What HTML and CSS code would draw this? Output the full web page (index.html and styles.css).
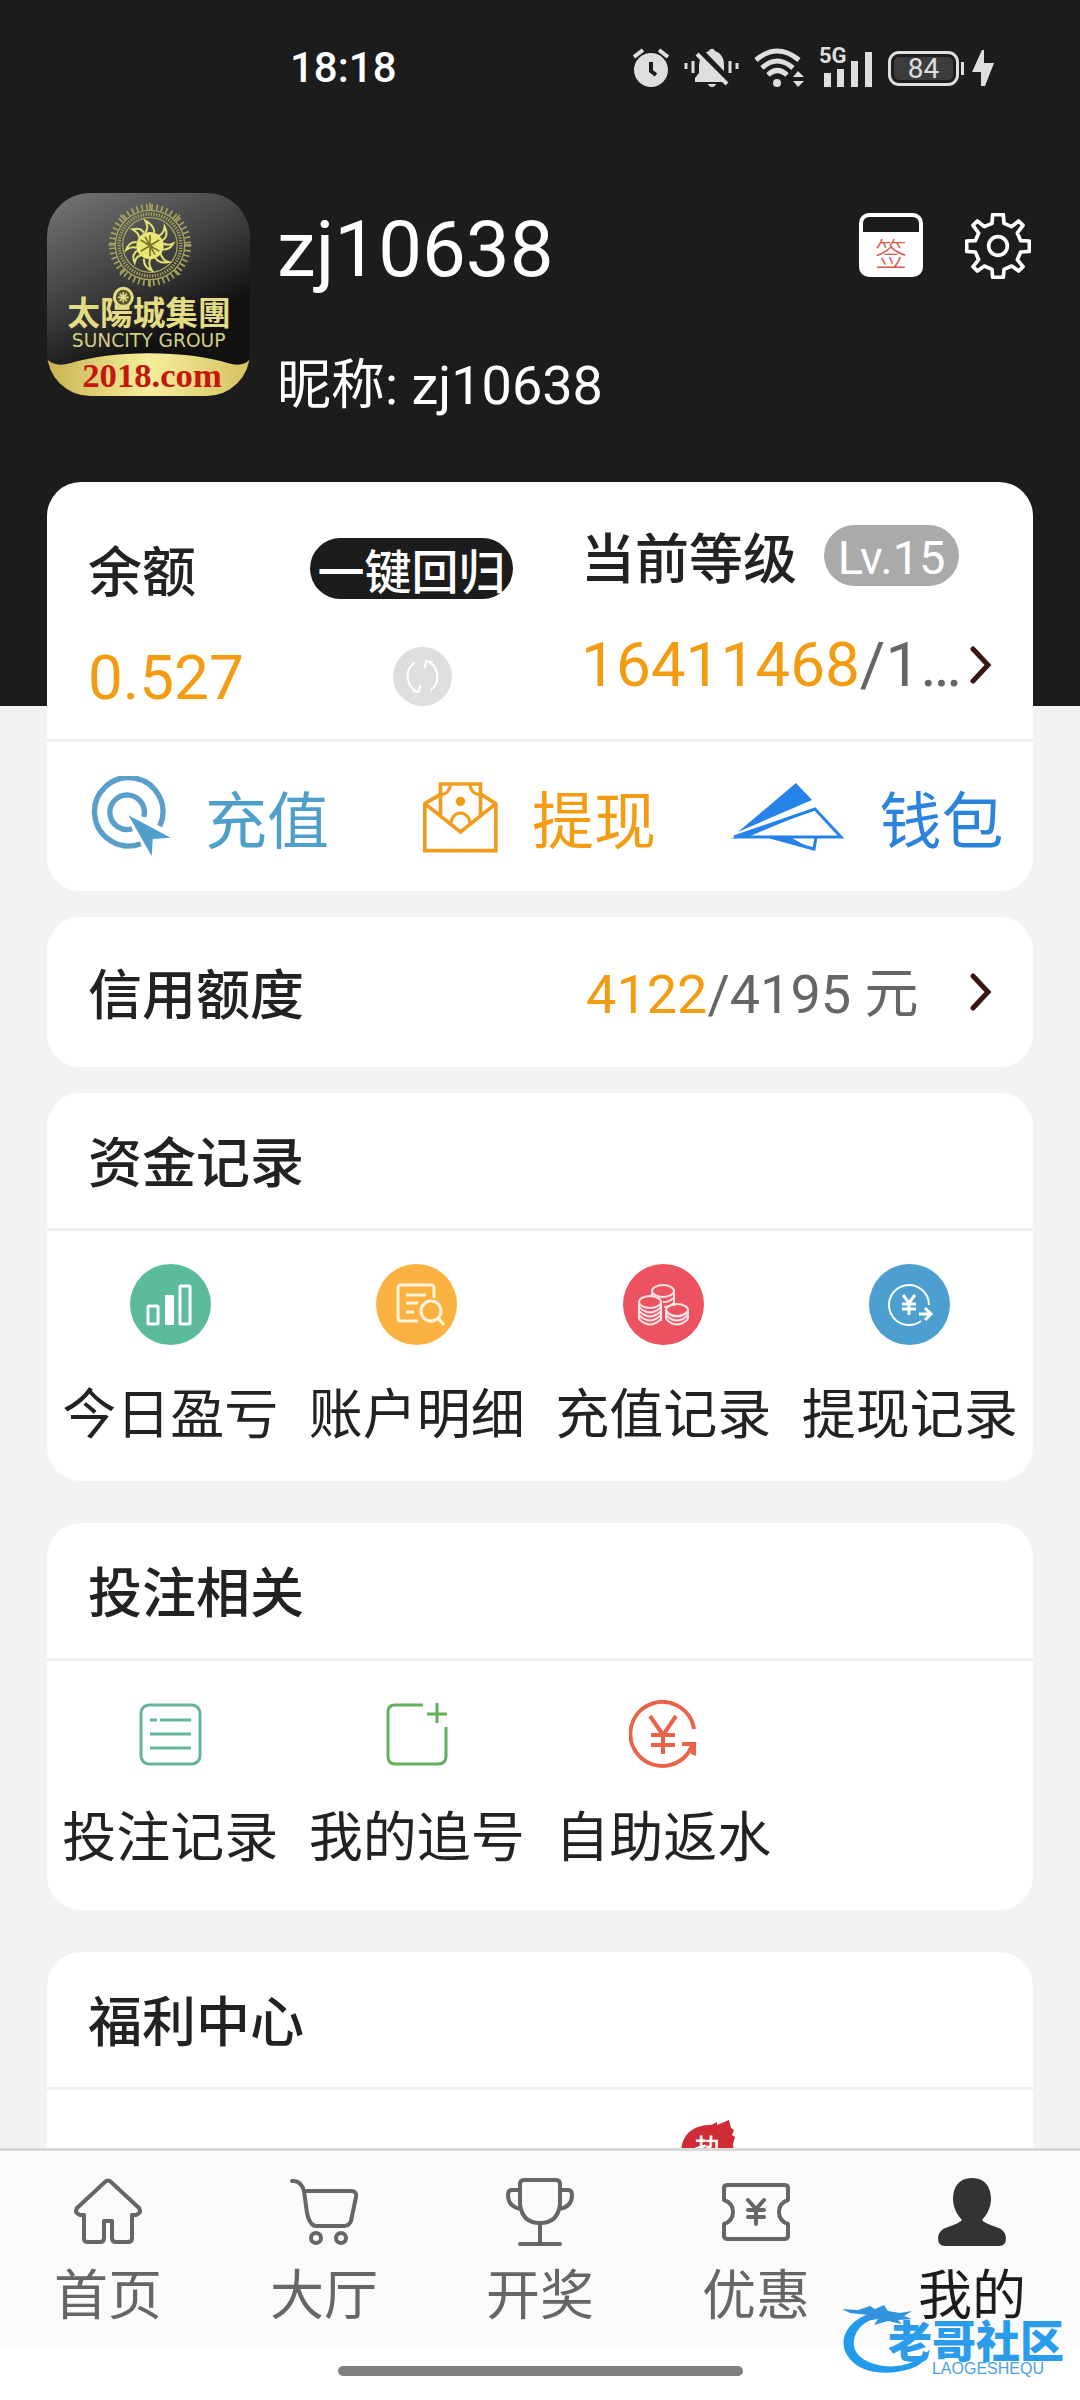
FILE: index.html
```html
<!DOCTYPE html>
<html lang="zh-CN">
<head>
  <meta charset="UTF-8">
  <title>我的</title>
  <meta name="viewport" content="width=device-width, initial-scale=1.0">
  <link rel="stylesheet" href="styles.css">
</head>
<body>

  <div class="screen">
    <div class="content">

      <header class="header">
        <div class="status-bar">
          <span class="clock">18:18</span>
          <div class="status-icons">
            <svg width="36" height="40" viewBox="0 0 36 40" fill="none" stroke="#dedede">
              <circle cx="18" cy="22" r="17" fill="#dedede" stroke="none"/>
              <path d="M1 9L10 2M35 9L26 2" stroke-width="4"/>
              <path d="M18 14V23L23 27" stroke="#1c1c1c" stroke-width="4"/>
            </svg>
            <svg width="55" height="40" viewBox="0 0 55 40">
              <path d="M11 34V30L15 25V17C16 6 22 4 25 3C26 0 30 0 31 3C37 5 40 10 40 17V25L45 30V34Z" fill="#dedede"/>
              <path d="M24 36H32Q31 39 28 39Q25 39 24 36Z" fill="#dedede"/>
              <path d="M15 3L46 35" stroke="#1c1c1c" stroke-width="8"/>
              <path d="M13 6L43 36" stroke="#dedede" stroke-width="4"/>
              <path d="M2 15V21M9 13V25M46 13V25M53 15V21" stroke="#dedede" stroke-width="3"/>
            </svg>
            <svg width="50" height="40" viewBox="0 0 50 40" fill="none" stroke="#dedede" stroke-width="5">
              <path d="M2 12Q23-6 45 12M8 20Q23 6 39 20M14 27Q23 18 33 27"/>
              <circle cx="23" cy="35" r="4" fill="#dedede" stroke="none"/>
              <path d="M39 29L44 23L50 29ZM39 33L44 39L50 33Z" fill="#dedede" stroke="none"/>
            </svg>
            <div class="signal">
              <span class="network">5G</span>
              <svg width="54" height="40" viewBox="0 0 54 40" fill="#dedede">
                <rect x="5" y="25" width="7" height="14"/>
                <rect x="18" y="21" width="7" height="18"/>
                <rect x="32" y="13" width="7" height="26"/>
                <rect x="46" y="4" width="7" height="35"/>
              </svg>
            </div>
            <span class="battery">84</span>
            <svg width="22" height="36" viewBox="0 0 22 36"><path d="M10 0L0 22H9V36H13L22 13H12V0Z" fill="#dedede"/></svg>
          </div>
        </div>

        <div class="profile">
          <svg class="avatar" viewBox="51 39 609 609" role="img" aria-label="太陽城集團">
            <defs>
              <linearGradient id="dark" x1="0" y1="0" x2="0.5" y2="1">
                <stop offset="0" stop-color="#777"/>
                <stop offset="0.5" stop-color="#3c3c3c"/>
                <stop offset="0.8" stop-color="#111"/>
              </linearGradient>
              <linearGradient id="gold" x1="0" y1="0" x2="1" y2="0">
                <stop offset="0" stop-color="#c9b24f"/>
                <stop offset="0.5" stop-color="#f6ee9c"/>
                <stop offset="1" stop-color="#d6c260"/>
              </linearGradient>
              <clipPath id="round"><rect x="51" y="39" width="609" height="609" rx="130"/></clipPath>
            </defs>
            <g clip-path="url(#round)">
              <rect x="51" y="39" width="609" height="609" fill="url(#dark)"/>
              <path d="M51 538Q75 562 120 550Q220 520 355 520Q500 520 595 550Q640 562 660 538V648H51Z" fill="url(#gold)"/>
              <g fill="none" stroke="#a8a45c">
                <circle cx="360" cy="195" r="114" stroke-width="18" stroke-dasharray="5 10"/>
                <circle cx="360" cy="195" r="104" stroke-width="4"/>
                <circle cx="360" cy="195" r="93" stroke-width="10" stroke-dasharray="4 4"/>
                <circle cx="360" cy="195" r="82" stroke-width="4"/>
                <path d="M360 68V90M360 300V322M235 195H255M465 195H485M270 105L285 120M450 105L435 120M270 285L285 270M450 285L435 270" stroke-width="5"/>
              </g>
              <g fill="none" stroke="#e4e273" stroke-width="6">
                <path d="M345 158Q358 145 346 122Q375 138 372 158M385 168Q402 162 404 140Q418 168 396 182M400 190Q412 198 430 190Q418 212 396 208M392 220Q396 240 415 246Q388 252 376 234M362 236Q352 250 366 272Q340 262 342 236M334 226Q318 228 314 248Q302 224 324 210M320 204Q306 198 288 210Q298 184 320 186M328 174Q326 158 308 148Q334 142 342 160"/>
              </g>
              <circle cx="360" cy="197" r="41" fill="#e9e874"/>
              <path d="M360 165V229M332 180L388 214M388 180L332 214M345 170L375 224" stroke="#77742c" stroke-width="5"/>
              <text class="logo-cn" x="357" y="435" text-anchor="middle" fill="#e3dc84">太陽城集團</text>
              <circle cx="280" cy="352" r="27" fill="#55532f" stroke="#e3dc84" stroke-width="9"/>
              <path d="M280 336V368M264 352H296M269 341L291 363M291 341L269 363" stroke="#e3dc84" stroke-width="5"/>
              <text class="logo-en" x="356" y="500" text-anchor="middle" fill="#d5cf80">SUNCITY GROUP</text>
              <text class="logo-url" x="366" y="622" text-anchor="middle" fill="#c4160c">2018.com</text>
            </g>
          </svg>
          <div class="user">
            <h1 class="username">zj10638</h1>
            <p class="nickname">昵称: zj10638</p>
          </div>
          <div class="tools">
            <button class="sign" aria-label="签到"><span class="sign-text">签</span></button>
            <button aria-label="设置">
              <svg width="66" height="66" viewBox="435 67 198 198" fill="none" stroke="#fff" stroke-width="11" stroke-linejoin="round">
                <path d="M518 72L550 72L552 98L575 108L596 91L609 104L592 127L602 150L628 151L628 182L602 184L592 207L609 228L596 241L575 226L552 236L550 260L518 260L516 236L493 226L472 241L459 228L476 207L466 184L440 182L440 151L466 150L476 127L459 104L472 91L493 108L516 98Z"/>
                <circle cx="534" cy="166" r="28"/>
              </svg>
            </button>
          </div>
        </div>
      </header>

      <main class="cards">
        <section class="card">
          <div class="balance">
            <div class="wallet">
              <span class="label">余额</span>
              <button class="recall">一键回归</button>
              <span class="amount">0.527</span>
              <button class="refresh" aria-label="刷新">
                <svg width="59" height="59" viewBox="0 0 59 59" fill="none" stroke="#fff" stroke-width="2" stroke-linecap="round">
                  <circle cx="29.5" cy="29.5" r="29.5" fill="#dedede" stroke="none"/>
                  <path d="M21 16A17 17 0 0 0 25 45M20 44L26 45L27 39M38 43A17 17 0 0 0 34 14M39 15L33 14L32 20"/>
                </svg>
              </button>
            </div>
            <div class="level">
              <div class="level-head">
                <span class="label">当前等级</span>
                <span class="level-badge">Lv.15</span>
              </div>
              <a class="level-value" href="#">
                <span><b>16411468</b>/1…</span>
                <svg class="chevron" width="22" height="38" viewBox="0 0 22 38"><path d="M3 3L18 19L3 35"/></svg>
              </a>
            </div>
          </div>
          <div class="actions">
            <a class="action deposit" href="#">
              <svg width="81" height="81" viewBox="92 80 244 244" fill="none" stroke="#5a9fca" stroke-width="16">
                <path d="M302 231A103 103 0 1 0 245 284M254 203A52 52 0 1 0 219 239"/>
                <path d="M208 198L335 266L281 270L278 322Z" fill="#4f9fcb" stroke="none"/>
              </svg>
              充值
            </a>
            <a class="action withdraw" href="#">
              <svg width="75" height="72" viewBox="1088 92 224 216" fill="none" stroke="#f09d1e" stroke-width="11">
                <path d="M1140 132L1093 160V301H1306V160L1262 132M1093 160L1200 245L1306 160M1140 195V101H1260V195"/>
                <path d="M1142 133Q1166 130 1170 103M1258 133Q1232 130 1228 103M1171 222A29 34 0 0 1 1229 222" stroke-width="9"/>
                <circle cx="1200" cy="153" r="14" fill="#f39a13" stroke="none"/>
              </svg>
              提现
            </a>
            <a class="action purse" href="#">
              <svg width="117" height="68" viewBox="0 0 117 68">
                <path d="M68 0L84 17L10 49Z" fill="#2583ea"/>
                <path d="M87 26L113 54H6Z" fill="none" stroke="#2583ea" stroke-width="3"/>
                <path d="M2 56L87 26L22 53Z" fill="#2583ea"/>
                <path d="M42 54L86 66L88 54" fill="none" stroke="#2583ea" stroke-width="3"/>
                <path d="M42 54L80 64L62 54Z" fill="#2583ea"/>
              </svg>
              钱包
            </a>
          </div>
        </section>

        <section class="card credit">
          <h2 class="label">信用额度</h2>
          <a class="credit-value" href="#">
            <span><b>4122</b>/4195 元</span>
            <svg class="chevron" width="22" height="38" viewBox="0 0 22 38"><path d="M3 3L18 19L3 35"/></svg>
          </a>
        </section>

        <section class="card group">
          <h2 class="title">资金记录</h2>
          <div class="items">
            <a class="item" href="#">
              <svg width="81" height="81" viewBox="0 0 81 81" fill="none" stroke="#fff" stroke-width="3">
                <circle cx="40.5" cy="40.5" r="40.5" fill="#5cbb9b" stroke="none"/>
                <rect x="18" y="42" width="10" height="18" rx="1"/>
                <rect x="35" y="31" width="9" height="30" rx="1" fill="#fff" stroke="none"/>
                <rect x="50" y="22" width="10" height="38" rx="1"/>
              </svg>
              今日盈亏
            </a>
            <a class="item" href="#">
              <svg width="81" height="81" viewBox="0 0 81 81" fill="none" stroke="#fff5dd" stroke-width="3">
                <circle cx="40.5" cy="40.5" r="40.5" fill="#fbb241" stroke="none"/>
                <path d="M58 34V24Q58 21 55 21H25Q22 21 22 24V54Q22 57 25 57H42M30 31H50M30 39H42M30 48H38"/>
                <circle cx="55" cy="47" r="10"/>
                <path d="M62 54L68 61"/>
              </svg>
              账户明细
            </a>
            <a class="item" href="#">
              <svg width="81" height="81" viewBox="0 0 81 81" fill="none" stroke="#ffe3e6" stroke-width="2">
                <circle cx="40.5" cy="40.5" r="40.5" fill="#ec525f" stroke="none"/>
                <ellipse cx="40" cy="27" rx="11" ry="6"/>
                <path d="M51 27V42M50 34Q47 38 40 38M51 39Q47 43 41 43M29 27V32"/>
                <ellipse cx="27" cy="38" rx="11" ry="6"/>
                <path d="M16 38V55M38 38V57M16 43Q27 54 38 43M16 47Q27 58 38 47M16 51Q27 62 38 51M16 55Q27 66 38 55"/>
                <ellipse cx="54" cy="46" rx="11" ry="6"/>
                <path d="M43 46V55M65 46V55M43 51Q54 62 65 51M43 47Q54 58 65 47M43 55Q54 66 65 55"/>
              </svg>
              充值记录
            </a>
            <a class="item" href="#">
              <svg width="81" height="81" viewBox="0 0 81 81" fill="none" stroke="#fff" stroke-width="3">
                <circle cx="40.5" cy="40.5" r="40.5" fill="#4c9fce" stroke="none"/>
                <path d="M60 41A20 20 0 1 0 52 57" stroke-width="2"/>
                <path d="M34 31L40 39L46 31M40 39V51M33 40H47M33 45H47M50 50H61M56 44L62 50L56 56"/>
              </svg>
              提现记录
            </a>
          </div>
        </section>

        <section class="card group">
          <h2 class="title">投注相关</h2>
          <div class="items items-small">
            <a class="item" href="#">
              <svg width="68" height="68" viewBox="0 0 68 68" fill="none" stroke="#66b59b" stroke-width="3">
                <rect x="5" y="5" width="59" height="59" rx="8"/>
                <path d="M14 20H21M24 20H55M14 34H55M14 48H55"/>
              </svg>
              投注记录
            </a>
            <a class="item" href="#">
              <svg width="68" height="68" viewBox="0 0 68 68" fill="none" stroke="#61af5b" stroke-width="3">
                <path d="M40 5H12Q5 5 5 12V56Q5 64 12 64H55Q63 64 63 56V27M54 3V23M44 14H64"/>
              </svg>
              我的追号
            </a>
            <a class="item" href="#">
              <svg width="68" height="68" viewBox="0 0 68 68" fill="none" stroke="#ec6248" stroke-width="4">
                <path d="M65 29A32 32 0 1 0 63 46"/>
                <path d="M53 42H67V56L62 54V46H53Z" fill="#ec6248" stroke="none"/>
                <path d="M21 16L34 35L47 16M34 35V54M22 35H46M22 45H46"/>
              </svg>
              自助返水
            </a>
          </div>
        </section>

        <section class="card group">
          <h2 class="title">福利中心</h2>
          <div class="items items-welfare">
            <div class="hot">
              <svg width="54" height="54" viewBox="0 0 54 54"><path d="M0 32C1 14 12 5 30 5L36 2L36 5L48 0L50 8L53 10L51 15L54 17L52 24Q56 54 27 54Q0 54 0 32Z" fill="#d02c35"/></svg>
              <span class="hot-text">热</span>
            </div>
          </div>
        </section>
      </main>
    </div>

    <nav class="tab-bar">
      <a class="tab" href="#">
        <svg width="68" height="68" viewBox="0 0 68 68"><path d="M31 4L3 30Q0 35 6 37H10V61Q10 64 14 64H26Q30 64 30 60V43H38V60Q38 64 42 64H54Q58 64 58 60V37H62Q68 35 65 30L37 4Q34 1 31 4Z"/></svg>
        首页
      </a>
      <a class="tab" href="#">
        <svg width="68" height="68" viewBox="0 0 68 68"><path d="M2 3Q11 2 14 13H61Q67 13 66 19L61 43Q59 48 54 48H26Q20 48 17 35L14 13"/><circle cx="26" cy="60" r="5"/><circle cx="51" cy="60" r="5"/></svg>
        大厅
      </a>
      <a class="tab" href="#">
        <svg width="68" height="68" viewBox="0 0 68 68"><path d="M18 2H50Q54 2 54 6V26Q52 45 34 45Q16 45 14 26V6Q14 2 18 2ZM14 12H6Q2 12 2 17Q2 29 15 31M54 12H62Q66 12 66 17Q66 29 53 31M34 45V66M14 66H54"/></svg>
        开奖
      </a>
      <a class="tab" href="#">
        <svg width="68" height="68" viewBox="0 0 68 68"><path d="M6 7H62Q66 7 66 10V22Q57 25 57 34Q57 43 66 46V58Q66 61 62 61H6Q2 61 2 58V46Q11 43 11 34Q11 25 2 22V10Q2 7 6 7ZM26 22L34 31L42 22M34 31V46M26 32H42M26 39H42"/></svg>
        优惠
      </a>
      <a class="tab active" href="#">
        <svg width="68" height="68" viewBox="0 0 68 68"><path d="M34 0C47 0 53 9 53 21C53 30 48 38 44 42Q46 45 58 49Q68 52 68 60Q68 68 61 68H7Q0 68 0 60Q0 52 10 49Q22 45 24 42C20 38 15 30 15 21C15 9 21 0 34 0Z"/></svg>
        我的
      </a>
    </nav>
    <div class="gesture-area"><div class="gesture-bar"></div></div>

    <div class="watermark">
      <svg width="90" height="70" viewBox="0 0 90 70">
        <path d="M30 9C5 16-4 36 5 51C16 70 45 72 68 65C80 61 86 54 88 45C78 58 60 64 42 62C22 59 10 50 12 36C14 24 24 15 38 14Z" fill="#229bed"/>
        <path d="M0 5L16 6L28 2L33 5L42 1L46 7L58 9L70 7L62 12L70 15L56 16L60 20L46 17L32 21L36 15L22 17L26 11L8 9Z" fill="#3292dc"/>
      </svg>
      <span class="site-name">老哥社区</span>
      <span class="site-latin">LAOGESHEQU</span>
    </div>
  </div>

</body>
</html>
```

FILE: styles.css
```css
* {
  box-sizing: border-box;
}

body {
  margin: 0;
  font-family: "Noto Sans CJK SC", sans-serif;
  font-size: 54px;
  line-height: 60px;
  color: #222;
  background: #f3f3f3;
}

h1, h2, p {
  margin: 0;
}

a {
  color: inherit;
  text-decoration: none;
}

button {
  padding: 0;
  border: none;
  background: none;
  font-family: inherit;
  cursor: pointer;
}

svg {
  display: block;
  flex-shrink: 0;
}

b {
  font-weight: 400;
  color: #f39c12;
}

.screen {
  position: relative;
  display: flex;
  flex-direction: column;
  height: 100vh;
}

.content {
  flex: 1;
  min-height: 0;
  overflow-y: auto;
  scrollbar-width: none;
}

/* header */
.header {
  padding-bottom: 290px;
  background: #1c1c1c;
  color: #fff;
}

.status-bar {
  display: flex;
  align-items: center;
  justify-content: space-between;
  height: 136px;
  padding: 0 86px 0 290px;
}

.clock {
  font-family: Roboto, sans-serif;
  font-size: 42px;
  font-weight: 500;
}

.status-icons {
  display: flex;
  align-items: center;
  gap: 15px;
}

.signal {
  position: relative;
}

.network {
  position: absolute;
  top: 0;
  left: 0;
  font-family: Roboto, sans-serif;
  font-size: 22px;
  line-height: 16px;
  font-weight: 700;
  color: #dedede;
}

.battery {
  position: relative;
  width: 71px;
  height: 35px;
  margin-right: -2px;
  border: 3px solid #dedede;
  border-radius: 11px;
  box-shadow: inset 0 0 0 3px #1c1c1c;
  background: #3c3c3c;
  font-family: Roboto, sans-serif;
  font-size: 28px;
  line-height: 30px;
  text-align: center;
  color: #dedede;
}

.battery::after {
  content: "";
  position: absolute;
  top: 8px;
  right: -8px;
  width: 3px;
  height: 13px;
  background: #dedede;
}

.profile {
  display: flex;
  align-items: flex-start;
  padding: 57px 49px 0 47px;
}

.avatar {
  width: 203px;
  height: 203px;
}

.logo-cn {
  font-family: "Noto Sans CJK TC", sans-serif;
  font-size: 98px;
  font-weight: 700;
}

.logo-en {
  font-family: "DejaVu Sans", sans-serif;
  font-size: 56px;
}

.logo-url {
  font-family: "Liberation Serif", serif;
  font-size: 104px;
  font-weight: 700;
}

.user {
  flex: 1;
  padding: 3px 0 0 27px;
  font-family: Roboto, "Noto Sans CJK SC", sans-serif;
}

.username {
  font-size: 78px;
  font-weight: 400;
  line-height: 108px;
}

.nickname {
  margin-top: 52px;
}

.tools {
  display: flex;
  gap: 42px;
  padding-top: 20px;
}

.sign {
  width: 64px;
  height: 64px;
  border: 4px solid #fff;
  border-radius: 10px;
  background: linear-gradient(#1c1c1c 15px, #fff 15px);
}

.sign-text {
  display: block;
  padding-top: 13px;
  font-size: 32px;
  font-weight: 300;
  line-height: 44px;
  color: #d9594f;
}

/* cards */
.cards {
  display: flex;
  flex-direction: column;
  margin-top: -224px;
  padding: 0 47px;
}

.card {
  border-radius: 34px;
  background: #fff;
}

.label {
  font-size: 54px;
  font-weight: 500;
}

.balance {
  display: grid;
  grid-template-columns: 6fr 5fr;
  padding: 43px 41px 30px;
  border-bottom: 3px solid #eee;
}

.wallet {
  display: grid;
  grid-template-columns: 222px 1fr;
  row-gap: 44px;
  align-items: center;
  padding: 13px 47px 0 0;
}

.recall {
  width: 203px;
  height: 61px;
  border-radius: 31px;
  background: #1c1c1c;
  font-size: 47px;
  font-weight: 500;
  line-height: 61px;
  color: #fff;
}

.amount {
  padding-top: 4px;
  font-family: Roboto, sans-serif;
  font-size: 62px;
  line-height: 62px;
  color: #f39c12;
}

.refresh {
  justify-self: center;
}

.level {
  display: flex;
  flex-direction: column;
  gap: 48px;
}

.level-head {
  display: flex;
  align-items: center;
  gap: 27px;
}

.level-badge {
  width: 135px;
  height: 61px;
  border-radius: 31px;
  background: #aaa;
  font-family: Roboto, sans-serif;
  font-size: 47px;
  line-height: 66px;
  text-align: center;
  color: #fff;
}

.level-value,
.credit-value {
  display: flex;
  align-items: center;
  justify-content: space-between;
  font-family: Roboto, "Noto Sans CJK SC", sans-serif;
  color: #666;
}

.level-value {
  font-size: 62px;
  line-height: 62px;
}

.credit-value {
  padding-left: 5px;
}

.credit-value span {
  padding-top: 6px;
}

.chevron {
  fill: none;
  stroke: #3a1512;
  stroke-width: 5;
  stroke-linecap: round;
}

.actions {
  display: grid;
  grid-template-columns: 12fr 11fr 10fr;
  align-items: center;
  height: 149px;
  padding: 0 27px 0 43px;
}

.action {
  display: flex;
  align-items: center;
  gap: 34px;
  font-size: 62px;
}

.deposit {
  color: #4f9fcb;
}

.withdraw {
  color: #f39c12;
}

.purse {
  color: #2b83dd;
}

.credit {
  display: grid;
  grid-template-columns: 6fr 5fr;
  align-items: center;
  height: 150px;
  margin: 26px 0;
  padding: 0 41px;
}

.group + .group {
  margin-top: 42px;
}

.title {
  padding: 37px 41px 38px;
  border-bottom: 3px solid #eee;
  font-size: 54px;
  font-weight: 500;
}

.items {
  display: grid;
  grid-template-columns: repeat(4, 1fr);
  padding: 33px 0 40px;
}

.items-small {
  padding: 39px 0 46px;
}

.item {
  display: flex;
  flex-direction: column;
  align-items: center;
  gap: 36px;
}

.items-welfare {
  height: 248px;
  padding-top: 30px;
}

.hot {
  position: relative;
  grid-column: 3;
  justify-self: center;
  width: 54px;
  margin-left: 90px;
}

.hot-text {
  position: absolute;
  top: 10px;
  left: 13px;
  font-size: 28px;
  font-weight: 500;
  line-height: 36px;
  color: #fff;
}

/* bottom navigation */
.tab-bar {
  display: flex;
  padding: 27px 0 24px;
  border-top: 3px solid #d9d9d9;
  background: #fbfbfb;
}

.tab {
  flex: 1;
  display: flex;
  flex-direction: column;
  align-items: center;
  gap: 16px;
  color: #666;
}

.tab svg {
  fill: none;
  stroke: #666;
  stroke-width: 4;
  stroke-linecap: round;
  stroke-linejoin: round;
}

.active {
  color: #1c1c1c;
}

.tab.active svg {
  fill: #333;
  stroke: none;
}

.gesture-area {
  height: 54px;
  padding-top: 20px;
  background: #fff;
}

.gesture-bar {
  width: 405px;
  height: 10px;
  margin: 0 auto;
  border-radius: 5px;
  background: #808080;
}

.watermark {
  position: absolute;
  right: 16px;
  bottom: 24px;
  width: 222px;
  height: 72px;
}

.site-name {
  position: absolute;
  right: 0;
  top: 14px;
  font-size: 44px;
  font-weight: 900;
  line-height: 42px;
  color: #2b9cec;
}

.site-latin {
  position: absolute;
  right: 20px;
  bottom: 0;
  font-family: "Liberation Sans", sans-serif;
  font-size: 16px;
  line-height: 14px;
  color: #4aa3e0;
}
```
